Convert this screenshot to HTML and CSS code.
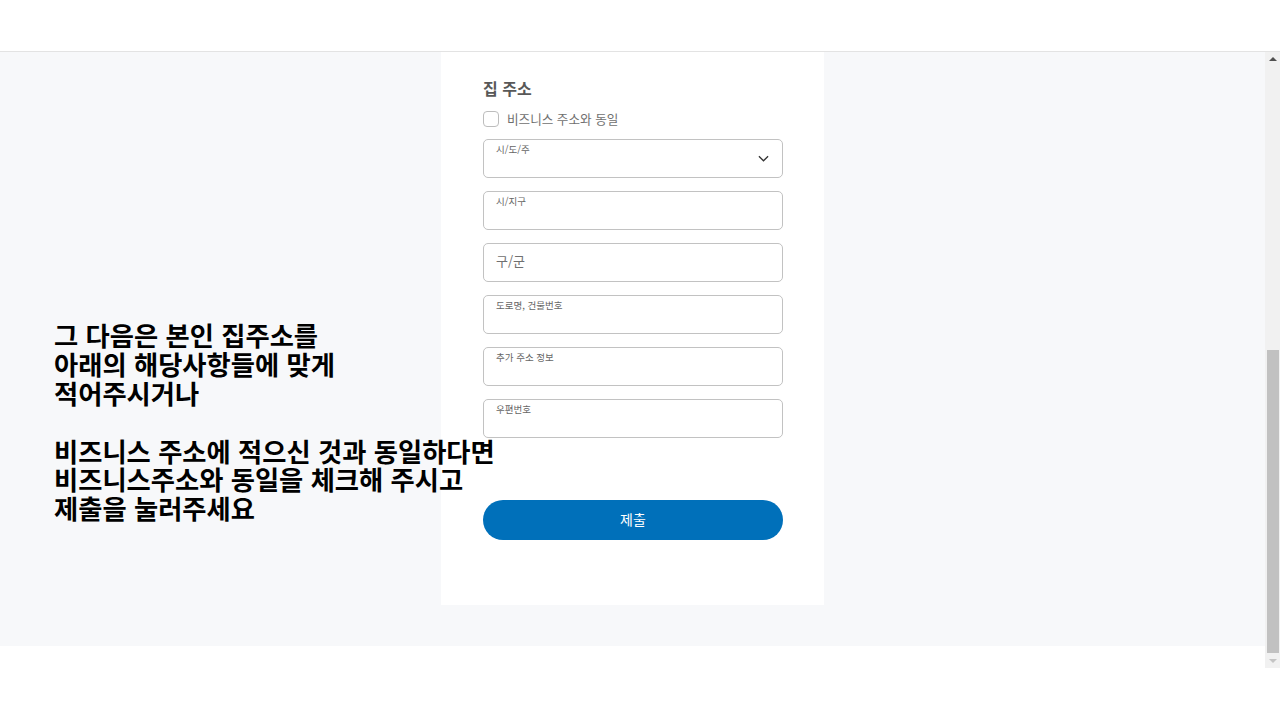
FILE: index.html
```html
<!doctype html>
<html lang="ko">
    <head>
        <meta charset="UTF-8" />
        <meta name="viewport" content="width=device-width, initial-scale=1.0" />
        <title>주소 입력</title>
        <link rel="stylesheet" href="styles.css">
    </head>
    <body>
        <header class="top-bar"></header>

        <div class="frame">
            <div class="scroller" id="scroller">
                <section class="step">
                    <div class="guide">
                        <p>그 다음은 본인 집주소를<br>아래의 해당사항들에 맞게<br>적어주시거나<br><br>비즈니스 주소에 적으신 것과 동일하다면<br>비즈니스주소와 동일을 체크해 주시고<br>제출을 눌러주세요</p>
                    </div>

                    <div class="card">
                        <form id="addressForm">
                            <div class="group">
                                <h2>비즈니스 주소</h2>
                                <div class="field"><span class="label">상호명</span><input type="text" /></div>
                                <div class="field"><span class="label">국가</span><select><option>대한민국</option></select><svg class="chevron" viewBox="0 0 12 7"><path d="M1 1l5 5 5-5" /></svg></div>
                                <div class="field"><span class="label">시/도/주</span><select><option></option></select><svg class="chevron" viewBox="0 0 12 7"><path d="M1 1l5 5 5-5" /></svg></div>
                                <div class="field"><span class="label">시/지구</span><input type="text" /></div>
                                <div class="field"><input type="text" class="plain" placeholder="구/군" /></div>
                                <div class="field"><span class="label">도로명, 건물번호</span><input type="text" /></div>
                                <div class="field"><span class="label">추가 주소 정보</span><input type="text" /></div>
                                <div class="field"><span class="label">우편번호</span><input type="text" /></div>
                            </div>

                            <div class="group">
                                <h2>집 주소</h2>
                                <label class="same">
                                    <input type="checkbox" name="same_as_business" />
                                    <span>비즈니스 주소와 동일</span>
                                </label>
                                <div class="field"><span class="label">시/도/주</span><select name="state"><option></option></select><svg class="chevron" viewBox="0 0 12 7"><path d="M1 1l5 5 5-5" /></svg></div>
                                <div class="field"><span class="label">시/지구</span><input type="text" name="city" /></div>
                                <div class="field"><input type="text" class="plain" name="district" placeholder="구/군" /></div>
                                <div class="field"><span class="label">도로명, 건물번호</span><input type="text" name="street" /></div>
                                <div class="field"><span class="label">추가 주소 정보</span><input type="text" name="extra" /></div>
                                <div class="field"><span class="label">우편번호</span><input type="text" name="zip" /></div>
                            </div>

                            <button type="submit">제출</button>
                        </form>
                    </div>
                </section>
                <div class="bottom-strip"></div>
            </div>

            <div class="scrollbar">
                <div class="sb-btn up"></div>
                <div class="sb-track"><div class="sb-thumb" id="thumb"></div></div>
                <div class="sb-btn down"></div>
            </div>
        </div>

        <script>
            const scroller = document.getElementById("scroller");
            const thumb = document.getElementById("thumb");

            // Start scrolled down to the home address part
            scroller.scrollTop = scroller.scrollHeight;

            // Size and place the scrollbar thumb from the scroll position
            function updateThumb() {
                const track = thumb.parentElement.clientHeight;
                const view = scroller.clientHeight;
                const total = scroller.scrollHeight;
                const size = Math.round(track * view / total);
                const top = Math.round((track - size) * scroller.scrollTop / (total - view));
                thumb.style.height = size + "px";
                thumb.style.marginTop = top + "px";
            }
            scroller.addEventListener("scroll", updateThumb);
            updateThumb();
        </script>
    </body>
</html>
```

FILE: styles.css
```css
body {
    margin: 0;
    padding: 0;
    background: #fff;
    font-family: "Noto Sans CJK KR", "Noto Sans", sans-serif;
}
.top-bar {
    height: 51px;
    background: #fff;
    border-bottom: 1px solid #e3e3e3;
}
.frame {
    display: flex;
    height: 616px;
}
.scroller {
    flex: 1;
    min-width: 0;
    overflow-y: auto;
    scrollbar-width: none;
}
.scrollbar {
    display: flex;
    flex-direction: column;
    width: 15px;
    background: #f1f1f1;
}
.sb-btn {
    display: flex;
    justify-content: center;
    height: 15px;
}
.sb-btn::before {
    content: "";
    width: 0;
    height: 0;
    border-left: 4px solid transparent;
    border-right: 4px solid transparent;
}
.sb-btn.up::before {
    margin-top: 5px;
    border-bottom: 4px solid #505050;
}
.sb-btn.down::before {
    margin-top: 6px;
    border-top: 4px solid #c4c4c4;
}
.sb-track {
    flex: 1;
}
.sb-thumb {
    margin: 0 1px 0 2px;
    background: #c1c1c1;
}
.step {
    display: grid;
    grid-template-columns: minmax(0, 1fr) 383px minmax(0, 1fr);
    background: #f7f8fa;
    padding: 40px 0 41px;
}
.bottom-strip {
    height: 22px;
    background: #fff;
}
.guide {
    z-index: 1;
    align-self: end;
    padding-left: 54px;
    margin-bottom: 82px;
}
.guide p {
    margin: 0;
    font-size: 26.3px;
    line-height: 28.8px;
    font-weight: 700;
    color: #000;
    white-space: nowrap;
}
.card {
    background: #fff;
    padding: 40px 41px 65px 42px;
}
.group + .group {
    margin-top: 80px;
}
h2 {
    margin: 0;
    font-size: 16px;
    line-height: 24px;
    font-weight: 700;
    color: #585858;
}
.same {
    display: flex;
    align-items: center;
    gap: 8px;
    height: 16px;
    margin-top: 11px;
    font-size: 12.6px;
    line-height: 14px;
    color: #6f6f6f;
}
.same input {
    appearance: none;
    margin: 0;
    width: 16px;
    height: 16px;
    border: 1px solid #bdbdbd;
    border-radius: 4px;
    background: #fff;
}
.field {
    position: relative;
    height: 39px;
    margin-top: 13px;
}
h2 + .field {
    margin-top: 12px;
}
.same + .field {
    margin-top: 12px;
}
.field input,
.field select {
    box-sizing: border-box;
    width: 100%;
    height: 39px;
    margin: 0;
    padding: 14px 12px 0;
    border: 1px solid #c2c2c2;
    border-radius: 5px;
    background: #fff;
    font-family: inherit;
    font-size: 14px;
    color: #333;
    appearance: none;
    outline: none;
}
.field input.plain {
    padding: 0 12px 4px;
    font-size: 13px;
}
.field input::placeholder {
    color: #707070;
}
.label {
    position: absolute;
    top: 4px;
    left: 13px;
    font-size: 9.5px;
    line-height: 12px;
    color: #666;
    pointer-events: none;
}
.chevron {
    position: absolute;
    right: 14px;
    top: 16px;
    width: 11px;
    height: 7px;
    fill: none;
    stroke: #333;
    stroke-width: 1.4;
    pointer-events: none;
}
button {
    display: block;
    width: 100%;
    height: 40px;
    margin-top: 62px;
    padding: 0 0 3px;
    border: none;
    border-radius: 20px;
    background: #0070ba;
    color: #fff;
    font-family: inherit;
    font-size: 14px;
    cursor: pointer;
}
```
